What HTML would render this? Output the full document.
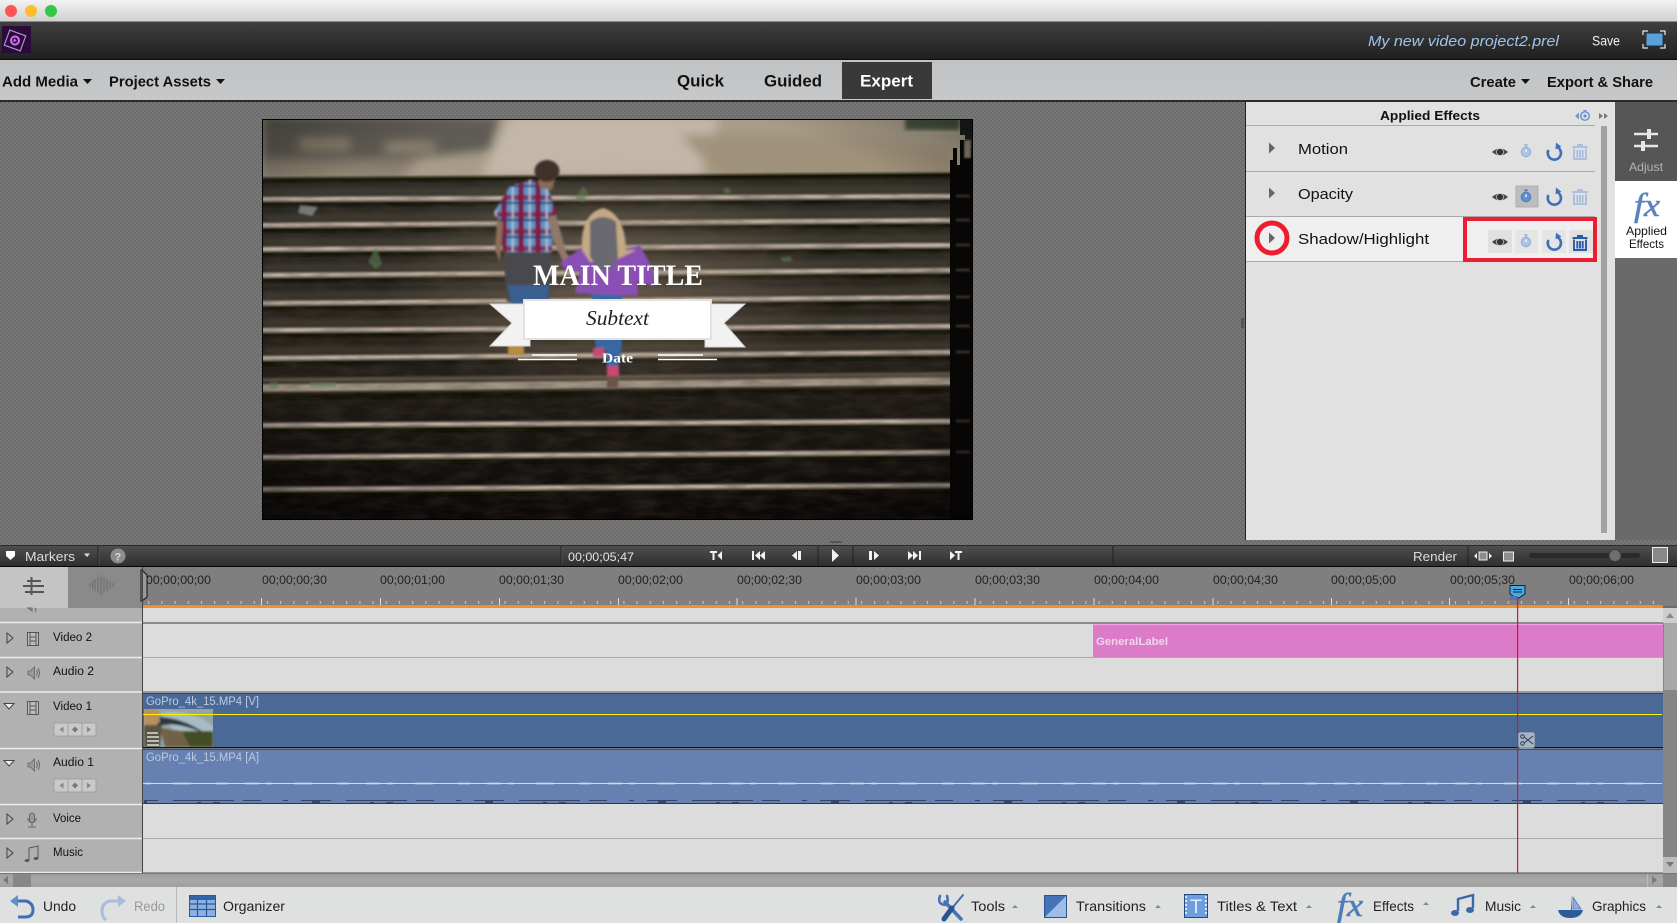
<!DOCTYPE html>
<html lang="en"><head><meta charset="utf-8"><title>Premiere Elements</title>
<style>
html,body{margin:0;padding:0;width:1677px;height:923px;overflow:hidden;background:#6c6c6c}
svg{position:absolute;left:0;top:0;display:block}
text{font-family:"Liberation Sans",Arial,sans-serif;white-space:pre}
.b{font-weight:700}.serif{font-family:"Liberation Serif",serif}
.r{font-size:12px;fill:#222}
.l{font-size:11.5px;fill:#111}
.e{font-size:15px;fill:#111}
.f{font-size:14px;fill:#222}
</style></head><body>
<svg width="1677" height="923" viewBox="0 0 1677 923" xmlns="http://www.w3.org/2000/svg">
<defs>
<linearGradient id="gt" x1="0" y1="0" x2="0" y2="1"><stop offset="0" stop-color="#f2f2f2"/><stop offset="1" stop-color="#cfcfcf"/></linearGradient>
<linearGradient id="gd" x1="0" y1="0" x2="0" y2="1"><stop offset="0" stop-color="#3f3f3f"/><stop offset="1" stop-color="#202020"/></linearGradient>
<linearGradient id="gm" x1="0" y1="0" x2="0" y2="1"><stop offset="0" stop-color="#c0c2c4"/><stop offset="1" stop-color="#c6c8ca"/></linearGradient>
<linearGradient id="gb" x1="0" y1="0" x2="0" y2="1"><stop offset="0" stop-color="#4e4e4e"/><stop offset="1" stop-color="#2f2f2f"/></linearGradient>
<linearGradient id="gs" x1="0" y1="0" x2="0" y2="1"><stop offset="0" stop-color="#9b9b9b"/><stop offset=".5" stop-color="#a9a9a9"/><stop offset="1" stop-color="#9f9f9f"/></linearGradient>
<linearGradient id="gst" x1="0" y1="0" x2="0" y2="1"><stop offset="0" stop-color="#2c2b24"/><stop offset=".5" stop-color="#26211b"/><stop offset="1" stop-color="#0d0907"/></linearGradient>
<radialGradient id="vig" cx=".5" cy=".45" r=".75"><stop offset=".65" stop-color="#000" stop-opacity="0"/><stop offset="1" stop-color="#000" stop-opacity=".45"/></radialGradient>
<radialGradient id="lit" cx=".5" cy=".5" r=".5"><stop offset="0" stop-color="#b29a80" stop-opacity=".36"/><stop offset=".6" stop-color="#a8957e" stop-opacity=".16"/><stop offset="1" stop-color="#a8957e" stop-opacity="0"/></radialGradient>
<pattern id="dots" width="4" height="4" patternUnits="userSpaceOnUse"><rect width="4" height="4" fill="#6c6c6c"/><rect x="0" y="0" width="2" height="2" fill="#787878"/><rect x="2" y="2" width="2" height="2" fill="#787878"/></pattern>
<pattern id="plaid" width="17" height="17" patternUnits="userSpaceOnUse"><rect width="17" height="17" fill="#5f95c8"/><rect x="8" width="6" height="17" fill="#7f1f48"/><rect y="8" width="17" height="5" fill="#7f1f48" opacity=".8"/><rect x="2" width="1.500" height="17" fill="#c2c9da"/><rect y="15" width="17" height="2" fill="#2c3060"/></pattern>
<pattern id="wave" width="173" height="3" patternUnits="userSpaceOnUse"><path d="M0 3V2H9V2H13V2H24V1H28V2H40V1H47V2H61V3H70V2H88V3H110V2H115V3H128V2H139V0H147V2H158V3H173Z" fill="#34466a"/></pattern>
<pattern id="wave2" width="121" height="3" patternUnits="userSpaceOnUse"><path d="M3 2h14M24 2h6M38 0h5M52 2h18M78 0h4M95 2h12" stroke="#e6e9ef" stroke-width="1" opacity=".5"/></pattern>
<pattern id="tick" width="13.2" height="3" patternUnits="userSpaceOnUse"><rect x="3" width="1" height="3" fill="#c9c9c9"/></pattern>
<filter id="bl1" x="-5%" y="-5%" width="110%" height="110%"><feGaussianBlur stdDeviation="1"/></filter>
<filter id="bl2" x="-10%" y="-10%" width="120%" height="120%"><feGaussianBlur stdDeviation="2"/></filter>
<filter id="bl5" x="-20%" y="-20%" width="140%" height="140%"><feGaussianBlur stdDeviation="5"/></filter>
<filter id="noise" x="0" y="0" width="100%" height="100%"><feTurbulence type="fractalNoise" baseFrequency=".035 .12" numOctaves="3" seed="4"/><feColorMatrix values="0 0 0 0 .06  0 0 0 0 .05  0 0 0 0 .04  0 0 0 1.6 -.55"/></filter>
<clipPath id="cf"><rect x="263" y="120" width="709" height="399"/></clipPath>
<clipPath id="cr"><rect x="143" y="567" width="1520" height="38"/></clipPath>
<clipPath id="cth"><rect x="144" y="709" width="69" height="38"/></clipPath>
<g id="eye"><path d="M-8 0Q0-7 8 0Q0 7-8 0Z" fill="#484848"/><circle r="3.500" fill="#333" stroke="#ccc" stroke-width=".8"/></g>
<g id="watch" fill="#adc5e8" stroke="#8faedb" stroke-width="1.200"><circle r="4.600" cy="1"/><path d="M-1.800-6H1.800M0-6V-4" fill="none"/><path d="M0 1V-1.500" fill="none" stroke="#fff"/></g>
<g id="reset" fill="none"><path d="M2.500-6.200A6.600 6.600 0 1 1-5.500-3" stroke="#3f70b6" stroke-width="2.600" transform="translate(0,1)"/><path d="M2-9.500L7.400-5.200L1.500-2.700Z" fill="#3f70b6"/></g>
<g id="trash" fill="none" stroke="#a4bbde" stroke-width="1.700"><path d="M-7.500-5H7.500M-3-7H3"/><path d="M-6-3.500V7H6V-3.500"/><path d="M-2.700-2V5.500M0-2V5.500M2.700-2V5.500"/></g>
<g id="trashd" fill="none" stroke="#2a5aa8" stroke-width="1.900"><path d="M-7.500-5H7.500M-3-7H3"/><path d="M-6-3.500V7H6V-3.500"/><path d="M-2.700-2V5.500M0-2V5.500M2.700-2V5.500"/></g>
<g id="tri"><path d="M0-5.500L6 0L0 5.500Z" fill="#666"/></g>
<g id="film" fill="none" stroke="#555" stroke-width="1"><rect x="-5.500" y="-6.500" width="11" height="13" fill="#bdbdbd"/><path d="M-3-6.500V6.500M3-6.500V6.500M-3-2H3M-3 2H3"/></g>
<g id="spk"><path d="M-5-2H-2.500L1.500-6V6L-2.500 2H-5Z" fill="#9a9a9a" stroke="#666" stroke-width=".8"/><path d="M3.500-3Q5 0 3.500 3M5-5Q8 0 5 5" fill="none" stroke="#666" stroke-width="1"/></g>
<g id="ttri"><path d="M0-5L6 0L0 5Z" fill="none" stroke="#444" stroke-width="1"/></g>
<g id="ttrid"><path d="M-5-3.500H5L0 2Z" fill="#eee" stroke="#444" stroke-width="1"/></g>
<g id="nav"><rect x="0" y="0" width="42" height="13" rx="1.500" fill="#c9c9c9" stroke="#999" stroke-width=".8"/><path d="M14 0V13M28 0V13" stroke="#999" stroke-width=".8"/><path d="M9.500 3.500L5.500 6.500L9.500 9.500Z" fill="#888"/><path d="M21 3.500L24 6.500L21 9.500L18 6.500Z" fill="#777"/><path d="M33 3.500L37 6.500L33 9.500Z" fill="#888"/></g>
</defs>

<!-- title bar -->
<rect width="1677" height="22" fill="url(#gt)"/>
<rect y="21" width="1677" height="1" fill="#8a8a8a"/>
<circle cx="11" cy="11" r="6" fill="#fc5753"/><circle cx="31" cy="11" r="6" fill="#fdbc2d"/><circle cx="51" cy="11" r="6" fill="#33c748"/>
<!-- dark bar -->
<rect y="22" width="1677" height="37" fill="url(#gd)"/>
<rect y="59" width="1677" height="1" fill="#0c0c0c"/>
<rect x="2" y="26" width="29" height="27" fill="#2a0c3a"/>
<g transform="translate(15,40.500) rotate(20)"><rect x="-8.500" y="-8" width="17" height="16" fill="none" stroke="#b78ad0" stroke-width="1.200"/><circle r="4" fill="none" stroke="#d070f0" stroke-width="2"/><path d="M-1.500-2L2 0L-1.500 2Z" fill="#d070f0"/></g>
<text x="1368" y="46" font-style="italic" font-size="15" fill="#9ec3ea" textLength="191" lengthAdjust="spacingAndGlyphs">My new video project2.prel</text>
<text x="1592" y="45.500" font-size="14" fill="#f0f0f0" textLength="28" lengthAdjust="spacingAndGlyphs">Save</text>
<rect x="1646" y="33" width="17" height="13" fill="#5ba0d8" stroke="#234" stroke-width="1"/>
<path d="M1643 35V31H1648M1660 31H1665V35M1665 44V48H1660M1648 48H1643V44" fill="none" stroke="#e8e8e8" stroke-width="1.200"/>
<!-- menu bar -->
<rect y="60" width="1677" height="41" fill="url(#gm)"/>
<rect y="100" width="1677" height="2" fill="#2b2b2b"/>
<text x="2" y="86.500" class="b" font-size="15" fill="#111" textLength="76" lengthAdjust="spacingAndGlyphs">Add Media</text>
<path d="M83 79H92L87.500 84Z" fill="#111"/>
<text x="109" y="86.500" class="b" font-size="15" fill="#111" textLength="102" lengthAdjust="spacingAndGlyphs">Project Assets</text>
<path d="M216 79H225L220.500 84Z" fill="#111"/>
<text x="677" y="86.500" class="b" font-size="16.500" fill="#111" textLength="47" lengthAdjust="spacingAndGlyphs">Quick</text>
<text x="764" y="86.500" class="b" font-size="16.500" fill="#111" textLength="58" lengthAdjust="spacingAndGlyphs">Guided</text>
<rect x="842" y="62" width="90" height="37" fill="#393939"/>
<text x="860" y="86.500" class="b" font-size="16.500" fill="#fff" textLength="53" lengthAdjust="spacingAndGlyphs">Expert</text>
<text x="1470" y="87" class="b" font-size="15" fill="#111" textLength="46" lengthAdjust="spacingAndGlyphs">Create</text>
<path d="M1521 79H1530L1525.500 84Z" fill="#111"/>
<text x="1547" y="87" class="b" font-size="15" fill="#111" textLength="106" lengthAdjust="spacingAndGlyphs">Export &amp; Share</text>

<!-- workspace -->
<rect y="102" width="1245" height="444" fill="url(#dots)"/>
<rect x="1241" y="318" width="3" height="10" fill="#555"/>
<!-- monitor frame -->
<rect x="262" y="119" width="711" height="401" fill="#000"/>
<g clip-path="url(#cf)">
  <rect x="263" y="120" width="709" height="60" fill="#a89d89"/>
  <g filter="url(#bl5)">
    <path d="M263 116H500L490 150L400 160H263Z" fill="#5f5c55"/>
    <path d="M263 160H420L400 178H263Z" fill="#8b806f"/>
    <path d="M510 116H720L700 178H480Z" fill="#c2b7a8"/>
    <path d="M680 135H860L950 150V178H720Z" fill="#a0927a"/>
    <path d="M300 138h50v12h-50ZM385 142h50v10h-50Z" fill="#8d8370"/>
  </g>
  <path d="M905 116H960V130H905Z" fill="#48533f" filter="url(#bl2)"/>
  <path d="M263 180L951 174V519H263Z" fill="url(#gst)"/>
  <g filter="url(#bl2)" fill="none" stroke="#5c5244" stroke-width="8" opacity=".4">
    <path d="M263 192L951 189M263 218L951 213M263 242L951 238M263 268L951 263M263 296L951 290M263 323L951 319M263 351L951 345"/>
  </g>
  <g filter="url(#bl1)" fill="none" stroke-linecap="round">
    <g stroke="#0c0907" stroke-width="5" opacity=".85">
      <path d="M263 180L951 175M263 204L951 201M263 230L951 225M263 254L951 250M263 280L951 275M263 308L951 302M263 335L951 331M263 363L951 357M263 397L951 390M263 430L951 426M263 462L951 457M263 494L951 490"/>
    </g>
    <g stroke="#c4b5a6" stroke-width="4.200">
      <path d="M263 199L951 196"/><path d="M263 225L951 220"/><path d="M263 249L951 245"/><path d="M263 275L951 270"/><path d="M263 303L951 297"/><path d="M263 330L951 326"/><path d="M263 358L951 352"/>
      <path d="M263 425L951 421"/><path d="M263 457L951 452"/><path d="M263 489L951 485"/>
    </g>
    <path d="M263 388L951 381" stroke="#a39686" stroke-width="8"/>
    <path d="M263 380L951 374" stroke="#5e5546" stroke-width="4"/>
  </g>
  <rect x="263" y="180" width="688" height="339" filter="url(#noise)" opacity=".45"/>
  <ellipse cx="610" cy="280" rx="230" ry="125" fill="url(#lit)"/>
  <path d="M950 172V160H953V148H957V165H960V140H972V519H950Z" fill="#090706"/>
  <path d="M960 120H972V148H965V135H960Z" fill="#1c1f1a"/>
  <path d="M964 140H971V158H964Z" fill="#8b8272" filter="url(#bl1)"/>
  <path d="M956 196h14M956 220h14M956 245h14M956 270h14M956 297h14M956 326h14M956 352h14M956 421h14M956 452h14" stroke="#4a4138" stroke-width="2" filter="url(#bl1)"/>
  <g filter="url(#bl1)">
    <!-- boy -->
    <path d="M503 252H551L549 302H507Z" fill="#4a494e"/>
    <path d="M508 285H549L548 304H511Z" fill="#3b5f90"/>
    <path d="M493 214L510 186L532 179L548 188L557 214L553 220L552 252H503L500 220Z" fill="url(#plaid)"/>
    <path d="M548 217L556 215L566 252L572 262L564 264L553 240Z" fill="#917867"/>
    <path d="M497 220L495 250L500 262L503 222Z" fill="#8d6d58"/>
    <path d="M538 180L556 176L552 190L540 188Z" fill="#8a6a58"/>
    <ellipse cx="547" cy="171" rx="12.500" ry="11" fill="#3f322b"/>
    <!-- girl -->
    <path d="M592 290H622L622 345L616 378L608 378L606 350L597 350L592 330Z" fill="#3767a2"/>
    <path d="M560 263L583 247L600 250L625 250L640 245L656 276L653 286L637 281L638 296L575 293L580 272L566 270Z" fill="#8a50b5"/>
    <path d="M582 250Q580 214 603 208Q625 214 626 250L636 250L612 262H590Z" fill="#c3a884"/>
    <path d="M590 222Q603 212 616 222L618 258L610 270H598L590 256Z" fill="#6b6870"/>
    <rect x="593" y="348" width="11" height="9" fill="#c84a72"/>
    <rect x="607" y="366" width="12" height="12" fill="#c84a72"/>
    <rect x="607" y="376" width="11" height="12" fill="#6a5246"/>
    <rect x="508" y="344" width="16" height="11" fill="#b78d43"/>
  </g>
  <path d="M300 205l18 2l-6 9l-14-3Z" fill="#aaa" opacity=".6" filter="url(#bl1)"/>
  <path d="M575 200l8-14l5 6l-4 10ZM722 190l6-3l4 5l-6 2ZM368 262l8-16l6 18l-6 5ZM780 258l10-2l3 5l-10 1ZM270 382h8v6h-8ZM310 382h26v5h-26Z" fill="#5d7a57" opacity=".6" filter="url(#bl1)"/>
  <rect x="263" y="120" width="709" height="399" fill="url(#vig)"/>
  <!-- ribbon -->
  <path d="M490 304H530V346H490L512 323Z" fill="#f2f2f2" stroke="#d5d5d5"/>
  <path d="M745 304H705V347H745L724 323Z" fill="#f2f2f2" stroke="#d5d5d5"/>
  <rect x="524" y="300" width="187" height="39" fill="#fff" stroke="#e2e2e2" stroke-width="2"/>
</g>
<text x="533" y="285" class="b serif" font-size="30" fill="#fff" textLength="170" lengthAdjust="spacingAndGlyphs">MAIN TITLE</text>
<text x="586" y="325" class="serif" font-style="italic" font-size="21" fill="#222" textLength="63" lengthAdjust="spacingAndGlyphs">Subtext</text>
<text x="602" y="362.500" class="b serif" font-size="14" fill="#fff" textLength="31" lengthAdjust="spacingAndGlyphs">Date</text>
<path d="M532 355H577M518 359.500H577M658 355H703M658 359.500H717" stroke="#fff" stroke-width="1.500"/>

<!-- Applied effects panel -->
<rect x="1245" y="102" width="1" height="438" fill="#222"/>
<rect x="1246" y="102" width="369" height="438" fill="#e1e1e1"/>
<text x="1380" y="120" class="b" font-size="13" fill="#111" textLength="100" lengthAdjust="spacingAndGlyphs">Applied Effects</text>
<path d="M1575 116L1579 112.500V119.500Z" fill="#6f97cf"/><g transform="translate(1585,116) scale(.85)"><circle r="5" fill="none" stroke="#5f8ccb" stroke-width="1.600"/><circle r="1.800" fill="#5f8ccb"/><path d="M-2-6.500H2" stroke="#5f8ccb"/></g>
<path d="M1599 113L1603 116L1599 119ZM1604 113L1608 116L1604 119Z" fill="#777"/>
<rect x="1246" y="125" width="349" height="1" fill="#aaa"/>
<rect x="1246" y="171" width="349" height="1" fill="#aaa"/>
<rect x="1246" y="216" width="349" height="1" fill="#aaa"/>
<rect x="1246" y="217" width="349" height="44" fill="#efefef"/>
<rect x="1246" y="261" width="349" height="1" fill="#aaa"/>
<rect x="1601" y="126" width="6" height="407" fill="#a2a2a2"/>
<use href="#tri" x="1269" y="148"/><use href="#tri" x="1269" y="193"/><use href="#tri" x="1269" y="238"/>
<text x="1298" y="154" class="e" textLength="50" lengthAdjust="spacingAndGlyphs">Motion</text>
<text x="1298" y="199" class="e" textLength="55" lengthAdjust="spacingAndGlyphs">Opacity</text>
<text x="1298" y="244" class="e" textLength="131" lengthAdjust="spacingAndGlyphs">Shadow/Highlight</text>
<use href="#eye" x="1500" y="152"/><use href="#eye" x="1500" y="197"/>
<use href="#watch" x="1526" y="151"/>
<rect x="1516" y="186" width="22" height="21" fill="#bdbdbd" stroke="#a8a8a8" stroke-width=".8"/>
<g transform="translate(1526,196)" fill="#5f90d2" stroke="#4f82c8" stroke-width="1.400"><circle r="4.600" cy="1"/><path d="M-1.800-6H1.800M0-6V-4" fill="none"/><path d="M0 1V-1.500" fill="none" stroke="#fff"/></g>
<use href="#reset" x="1554" y="152"/><use href="#reset" x="1554" y="197"/>
<use href="#trash" x="1580" y="152"/><use href="#trash" x="1580" y="197"/>
<rect x="1488" y="230" width="24" height="23" fill="#e1e1e1"/><rect x="1515" y="230" width="23" height="23" fill="#e5e5e5"/><rect x="1542" y="230" width="24" height="23" fill="#e5e5e5"/><rect x="1569" y="230" width="24" height="23" fill="#e1e1e1"/>
<use href="#eye" x="1500" y="242"/><use href="#watch" x="1526" y="241"/><use href="#reset" x="1554" y="242"/><use href="#trashd" x="1580" y="243"/>
<rect x="1465" y="219" width="130" height="41" fill="none" stroke="#ed1c2e" stroke-width="4"/>
<circle cx="1272" cy="238" r="15" fill="none" stroke="#ed1c2e" stroke-width="5"/>
<!-- side tabs -->
<rect x="1615" y="102" width="62" height="79" fill="#565656"/>
<path d="M1634 134H1658M1634 146H1658" stroke="#e6e6e6" stroke-width="2.500"/>
<rect x="1647" y="129" width="4" height="10" fill="#e6e6e6"/><rect x="1641" y="141" width="4" height="10" fill="#e6e6e6"/>
<text x="1629" y="171" font-size="12" fill="#b5b5b5" textLength="34" lengthAdjust="spacingAndGlyphs">Adjust</text>
<rect x="1615" y="181" width="62" height="77" fill="#fff"/>
<rect x="1615" y="258" width="62" height="282" fill="#6a6a6a"/>
<text x="1634" y="216" class="serif" font-style="italic" font-size="33" fill="#5a84c0" stroke="#5a84c0" stroke-width=".6" textLength="26" lengthAdjust="spacingAndGlyphs">fx</text>
<text x="1626" y="235" font-size="12" fill="#111" textLength="41" lengthAdjust="spacingAndGlyphs">Applied</text>
<text x="1629" y="248" font-size="12" fill="#111" textLength="35" lengthAdjust="spacingAndGlyphs">Effects</text>

<!-- timeline toolbar -->
<rect y="540" width="1677" height="6" fill="url(#dots)"/>
<rect x="830" y="541" width="12" height="2" fill="#555"/>
<rect y="545" width="1677" height="1" fill="#2c2c2c"/>
<rect y="546" width="1677" height="20" fill="url(#gb)"/>
<rect y="566" width="1677" height="1" fill="#050505"/>
<path d="M6 551H15V556L10.500 560L6 556Z" fill="#fff"/>
<text x="25" y="561" font-size="12.500" fill="#ddd" textLength="50" lengthAdjust="spacingAndGlyphs">Markers</text>
<path d="M84 553.500H90L87 557Z" fill="#ddd"/>
<path d="M98 546V566M561 546V566M818 546V566M853 546V566M1113 546V566M1468 546V566" stroke="#222" stroke-width="1"/>
<path d="M99 546V566M562 546V566" stroke="#5a5a5a" stroke-width="1" opacity=".6"/>
<circle cx="118" cy="556" r="7.500" fill="#8c8c8c"/><text x="114.500" y="560.500" class="b" font-size="11" fill="#d8d8d8">?</text>
<text x="568" y="561" font-size="12" fill="#e4e4e4" textLength="66" lengthAdjust="spacingAndGlyphs">00;00;05;47</text>
<g fill="#f2f2f2">
<path d="M710 551H717V553H714.500V560H712.500V553H710ZM722 551V560L717.500 555.500Z"/>
<path d="M752 551H754V560H752ZM760 551V560L755 555.500ZM765 551V560L760 555.500Z"/>
<path d="M797 551V560L792 555.500ZM798 551H801V560H798Z"/>
<path d="M832 549L839 555.500L832 562Z"/>
<path d="M869 551H872V560H869ZM874 551L879 555.500L874 560Z"/>
<path d="M908 551L913 555.500L908 560ZM913 551L918 555.500L913 560ZM919 551H921V560H919Z"/>
<path d="M950 551L955 555.500L950 560ZM955 551H962V553H959.500V560H957.500V553H955Z"/>
</g>
<text x="1413" y="561" font-size="13" fill="#ddd" textLength="44" lengthAdjust="spacingAndGlyphs">Render</text>
<path d="M1474 556L1477 553V559ZM1492 556L1489 553V559Z" fill="#eee"/><rect x="1479" y="552" width="8" height="8" fill="#8d8d8d" stroke="#eee"/>
<rect x="1503.500" y="552" width="10" height="9" fill="#8d8d8d" stroke="#eee"/>
<rect x="1529" y="553" width="111" height="5" rx="2.500" fill="#2a2a2a"/>
<circle cx="1615" cy="555.500" r="6" fill="#6e6e6e" stroke="#3a3a3a"/>
<rect x="1652.500" y="547.500" width="15" height="15" fill="#888" stroke="#eee"/>

<!-- ruler -->
<rect x="143" y="567" width="1534" height="39" fill="#7f7f7f"/>
<rect y="567" width="68" height="41" fill="#c4c4c4"/>
<rect x="68" y="567" width="74" height="41" fill="#8a8a8a"/>
<path d="M31.500 577V595M27 581H41M23 586H44M25 592H44" stroke="#555" stroke-width="2" fill="none"/>
<path d="M90 583v4M92.500 581v8M95 579v12M98 577v16M101 575v20M104 577v16M107 579v12M110 581v8M113 583v4" stroke="#6a6a6a" stroke-width="1"/>
<path d="M142 570L147 575V597L142 601L141 601V570Z" fill="#9a9a9a" stroke="#111"/>
<g clip-path="url(#cr)">
<text x="146" y="584" class="r" textLength="65" lengthAdjust="spacingAndGlyphs">00;00;00;00</text>
<text x="262" y="584" class="r" textLength="65" lengthAdjust="spacingAndGlyphs">00;00;00;30</text>
<text x="380" y="584" class="r" textLength="65" lengthAdjust="spacingAndGlyphs">00;00;01;00</text>
<text x="499" y="584" class="r" textLength="65" lengthAdjust="spacingAndGlyphs">00;00;01;30</text>
<text x="618" y="584" class="r" textLength="65" lengthAdjust="spacingAndGlyphs">00;00;02;00</text>
<text x="737" y="584" class="r" textLength="65" lengthAdjust="spacingAndGlyphs">00;00;02;30</text>
<text x="856" y="584" class="r" textLength="65" lengthAdjust="spacingAndGlyphs">00;00;03;00</text>
<text x="975" y="584" class="r" textLength="65" lengthAdjust="spacingAndGlyphs">00;00;03;30</text>
<text x="1094" y="584" class="r" textLength="65" lengthAdjust="spacingAndGlyphs">00;00;04;00</text>
<text x="1213" y="584" class="r" textLength="65" lengthAdjust="spacingAndGlyphs">00;00;04;30</text>
<text x="1331" y="584" class="r" textLength="65" lengthAdjust="spacingAndGlyphs">00;00;05;00</text>
<text x="1450" y="584" class="r" textLength="65" lengthAdjust="spacingAndGlyphs">00;00;05;30</text>
<text x="1569" y="584" class="r" textLength="65" lengthAdjust="spacingAndGlyphs">00;00;06;00</text>
</g>
<rect x="143" y="601" width="1518" height="3" fill="url(#tick)"/>
<path d="M261.500 598v7M380.500 598v7M499.500 598v7M618.500 598v7M737 598v7M856 598v7M975 598v7M1094 598v7M1213 598v7M1331.500 598v7M1449.500 598v7M1568.500 598v7" stroke="#ddd"/>
<rect x="143" y="605" width="1520" height="3" fill="#f0902a"/>

<!-- left column -->
<rect y="608" width="142" height="265" fill="#b1b1b1"/>
<path d="M28 608L32 611V608ZM35 608Q37 610 35 612" fill="none" stroke="#666"/>
<rect x="142" y="567" width="1" height="306" fill="#444"/>
<path d="M0 622.500H142M0 657.500H142M0 692H142M0 748.500H142M0 804.500H142M0 838.500H142M0 872.500H142" stroke="#ececec" stroke-width="1.400"/>
<!-- tracks -->
<rect x="143" y="608" width="1520" height="265" fill="#dcdcdc"/>
<rect x="143" y="622" width="1520" height="2" fill="#8b8b8b"/>
<rect x="143" y="657" width="1520" height="1" fill="#aaa"/>
<rect x="143" y="691" width="1520" height="2" fill="#999"/>
<rect x="143" y="838" width="1520" height="1" fill="#aaa"/>
<rect x="143" y="872" width="1520" height="1" fill="#999"/>
<rect x="1093" y="624" width="570" height="33" fill="#dc7bc8"/><rect x="1093" y="624" width="570" height="1" fill="#f3a2e6"/>
<text x="1096" y="645" class="b" font-size="11" fill="#f0d4ec" textLength="72" lengthAdjust="spacingAndGlyphs">GeneralLabel</text>
<!-- video clip -->
<rect x="143" y="693" width="1520" height="54" fill="#4a6997"/>
<rect x="143" y="693" width="1520" height="1" fill="#2d4265"/>
<rect x="143" y="747" width="1520" height="1.500" fill="#111"/>
<text x="146" y="705" font-size="11.500" fill="#bccae0" textLength="113" lengthAdjust="spacingAndGlyphs">GoPro_4k_15.MP4 [V]</text>
<g clip-path="url(#cth)"><rect x="144" y="709" width="69" height="38" fill="#93a5a8"/><g filter="url(#bl1)"><path d="M160 713Q190 708 213 726V732H175Z" fill="#a8bcc4"/><path d="M154 717Q180 716 205 733L190 728Q170 722 158 726Z" fill="#2e363c"/><path d="M170 731H213V747H178Z" fill="#434d26"/><path d="M160 728L182 731L190 747H165Z" fill="#6f6246"/><path d="M144 709H158L160 722L152 727H144Z" fill="#b8905f"/><path d="M144 725H162L160 747H144Z" fill="#5a5443"/></g><path d="M147 733H158M147 737H159M147 741H159M147 745H159" stroke="#ddd" stroke-width="1.500"/></g>
<rect x="143" y="714" width="1519" height="1" fill="#fbf000"/>
<!-- audio clip -->
<rect x="143" y="749" width="1520" height="55" fill="#6681b1"/>
<rect x="143" y="749" width="1520" height="1" fill="#3d4f70"/>
<rect x="144" y="800" width="1519" height="3" fill="url(#wave)"/>
<rect x="143" y="803" width="1520" height="1" fill="#2a3a55"/>
<text x="146" y="761" font-size="11.500" fill="#bccae0" textLength="113" lengthAdjust="spacingAndGlyphs">GoPro_4k_15.MP4 [A]</text>
<rect x="144" y="782" width="1519" height="3" fill="url(#wave2)"/>
<rect x="143" y="783" width="1519" height="1" fill="#f6ee1a"/>
<!-- track labels -->
<use href="#ttri" x="7" y="638"/><use href="#film" x="33" y="639"/><text x="53" y="641" class="l" textLength="39" lengthAdjust="spacingAndGlyphs">Video 2</text>
<use href="#ttri" x="7" y="672"/><use href="#spk" x="33" y="673"/><text x="53" y="675" class="l" textLength="41" lengthAdjust="spacingAndGlyphs">Audio 2</text>
<use href="#ttrid" x="9" y="707"/><use href="#film" x="33" y="708"/><text x="53" y="710" class="l" textLength="39" lengthAdjust="spacingAndGlyphs">Video 1</text>
<use href="#nav" x="54" y="723"/>
<use href="#ttrid" x="9" y="764"/><use href="#spk" x="33" y="765"/><text x="53" y="766" class="l" textLength="41" lengthAdjust="spacingAndGlyphs">Audio 1</text>
<use href="#nav" x="54" y="779"/>
<use href="#ttri" x="7" y="819"/><g fill="none" stroke="#666"><rect x="29.500" y="813" width="5" height="10" rx="2.500" fill="#999"/><path d="M28 818v2q4 5 8 0v-2M32 824v3M28 827H36"/></g><text x="53" y="822" class="l" textLength="28" lengthAdjust="spacingAndGlyphs">Voice</text>
<use href="#ttri" x="7" y="853"/><path d="M29 848L38 846V858M29 848V860" fill="none" stroke="#555"/><ellipse cx="27" cy="860.500" rx="2.500" ry="1.500" fill="#555"/><ellipse cx="36" cy="858.500" rx="2.500" ry="1.500" fill="#555"/><text x="53" y="856" class="l" textLength="30" lengthAdjust="spacingAndGlyphs">Music</text>
<!-- vertical scrollbar -->
<rect x="1663" y="608" width="14" height="265" fill="#858585"/>
<rect x="1664" y="623" width="13" height="67" fill="#a8a8a8"/>
<rect x="1663" y="608" width="14" height="15" fill="#cdcdcd"/>
<path d="M1666 618H1674L1670 613Z" fill="#888"/>
<rect x="1663" y="857" width="14" height="16" fill="#bdbdbd"/>
<path d="M1666 862H1674L1670 867Z" fill="#777"/>
<!-- playhead -->
<path d="M1510 585.500H1525V594L1519 598H1516L1510 594Z" fill="#4aa7e6" stroke="#123"/>
<path d="M1513 589.500H1522M1513 592H1522" stroke="#123"/>
<path d="M1509 599L1511 596H1518V600H1509Z" fill="#5a70b8"/>
<rect x="1517" y="597" width="1.200" height="276" fill="#d4103c"/>
<rect x="1518" y="732" width="17" height="16" rx="2.500" fill="#a8b4c8" stroke="#5b6b88" stroke-width=".7"/>
<path d="M1524 737L1533 744M1524 743L1533 736" stroke="#2f3a50" stroke-width="1" fill="none"/><circle cx="1522.500" cy="736.500" r="1.800" fill="none" stroke="#2f3a50"/><circle cx="1522.500" cy="743.500" r="1.800" fill="none" stroke="#2f3a50"/>
<!-- h scrollbar -->
<rect y="873" width="1677" height="14" fill="url(#gs)"/>
<rect y="873" width="1677" height="1" fill="#777"/>
<rect x="13" y="874" width="18" height="13" fill="#878787"/>
<path d="M8 876L3 880L8 884Z" fill="#777"/>
<path d="M1652 876L1657 880L1652 884Z" fill="#777"/><rect x="1647" y="874" width="1" height="13" fill="#bbb"/>
<rect x="1663" y="874" width="14" height="13" fill="#888"/>
<!-- footer -->
<rect y="887" width="1677" height="36" fill="#dfe0e0"/>
<rect x="176" y="887" width="1" height="36" fill="#b8b8b8"/>
<path d="M16 901H26Q33 903 33 910Q33 917 25 917H18" fill="none" stroke="#3f6fb5" stroke-width="3"/><path d="M18 895V907L10 901Z" fill="#5f8dcf"/>
<text x="43" y="911" class="f" textLength="33" lengthAdjust="spacingAndGlyphs">Undo</text>
<path d="M119 901H110Q102 903 102 911Q102 917 106 920" fill="none" stroke="#a9bcd8" stroke-width="3"/><path d="M118 895V907L126 901Z" fill="#a9bcd8"/>
<text x="134" y="911" class="f" style="fill:#9a9a9a" textLength="31" lengthAdjust="spacingAndGlyphs">Redo</text>
<rect x="189.500" y="895.500" width="26" height="21" fill="#8fb0de" stroke="#245a9e"/><rect x="190" y="896" width="25" height="4" fill="#2f64aa"/>
<path d="M190 904H215M190 909.500H215M197.500 900V916M206.500 900V916" stroke="#245a9e" stroke-width="1.200"/>
<text x="223" y="911" class="f" textLength="62" lengthAdjust="spacingAndGlyphs">Organizer</text>

<!-- footer right -->
<g fill="none" stroke-linecap="round"><path d="M945 902L961 919" stroke="#4474b5" stroke-width="3.600"/><path d="M940 896Q937 904 945 905Q949 902 947 896" stroke="#4474b5" stroke-width="2.600"/><path d="M963 895L953 907" stroke="#3f6fb5" stroke-width="2"/><path d="M952 908L944 919" stroke="#2a5490" stroke-width="5"/></g>
<text x="971" y="911" class="f" textLength="34" lengthAdjust="spacingAndGlyphs">Tools</text><path d="M1012 908H1018L1015 905Z" fill="#888"/>
<rect x="1044.500" y="895.500" width="22" height="22" fill="#9dbde8" stroke="#2a5490"/><path d="M1045 896H1066L1045 917Z" fill="#4474b5"/>
<text x="1076" y="911" class="f" textLength="70" lengthAdjust="spacingAndGlyphs">Transitions</text><path d="M1155 908H1161L1158 905Z" fill="#888"/>
<rect x="1184.500" y="894.500" width="23" height="23" fill="#6d9ee0" stroke="#24477c"/><path d="M1186 896v20M1206 896v20" stroke="#fff" stroke-width="1.500" stroke-dasharray="2 2"/>
<text x="1190" y="913" font-size="19" fill="#e4eefa" textLength="12" lengthAdjust="spacingAndGlyphs">T</text>
<text x="1217" y="911" class="f" textLength="80" lengthAdjust="spacingAndGlyphs">Titles &amp; Text</text><path d="M1306 908H1312L1309 905Z" fill="#888"/>
<text x="1337" y="916" class="serif" font-style="italic" font-size="33" fill="#4f7cba" stroke="#4f7cba" stroke-width=".6" textLength="26" lengthAdjust="spacingAndGlyphs">fx</text>
<text x="1373" y="911" class="f" textLength="41" lengthAdjust="spacingAndGlyphs">Effects</text><path d="M1423 905H1429L1426 902Z" fill="#888"/>
<path d="M1458 911V899L1473 895V908" fill="none" stroke="#3a68aa" stroke-width="2.400"/><ellipse cx="1455" cy="913" rx="4" ry="3" fill="#3a68aa"/><ellipse cx="1470" cy="910" rx="4" ry="3" fill="#3a68aa"/>
<text x="1485" y="911" class="f" textLength="36" lengthAdjust="spacingAndGlyphs">Music</text><path d="M1530 908H1536L1533 905Z" fill="#888"/>
<path d="M1571 895V910H1558Q1560 918 1570 918Q1581 918 1583 910H1572Z" fill="#2d5a9c"/><path d="M1573 897L1581 909H1573Z" fill="#8fb0de" stroke="#2d5a9c" stroke-width=".6"/>
<text x="1592" y="911" class="f" textLength="54" lengthAdjust="spacingAndGlyphs">Graphics</text><path d="M1656 908H1662L1659 905Z" fill="#888"/>
</svg>
</body></html>
